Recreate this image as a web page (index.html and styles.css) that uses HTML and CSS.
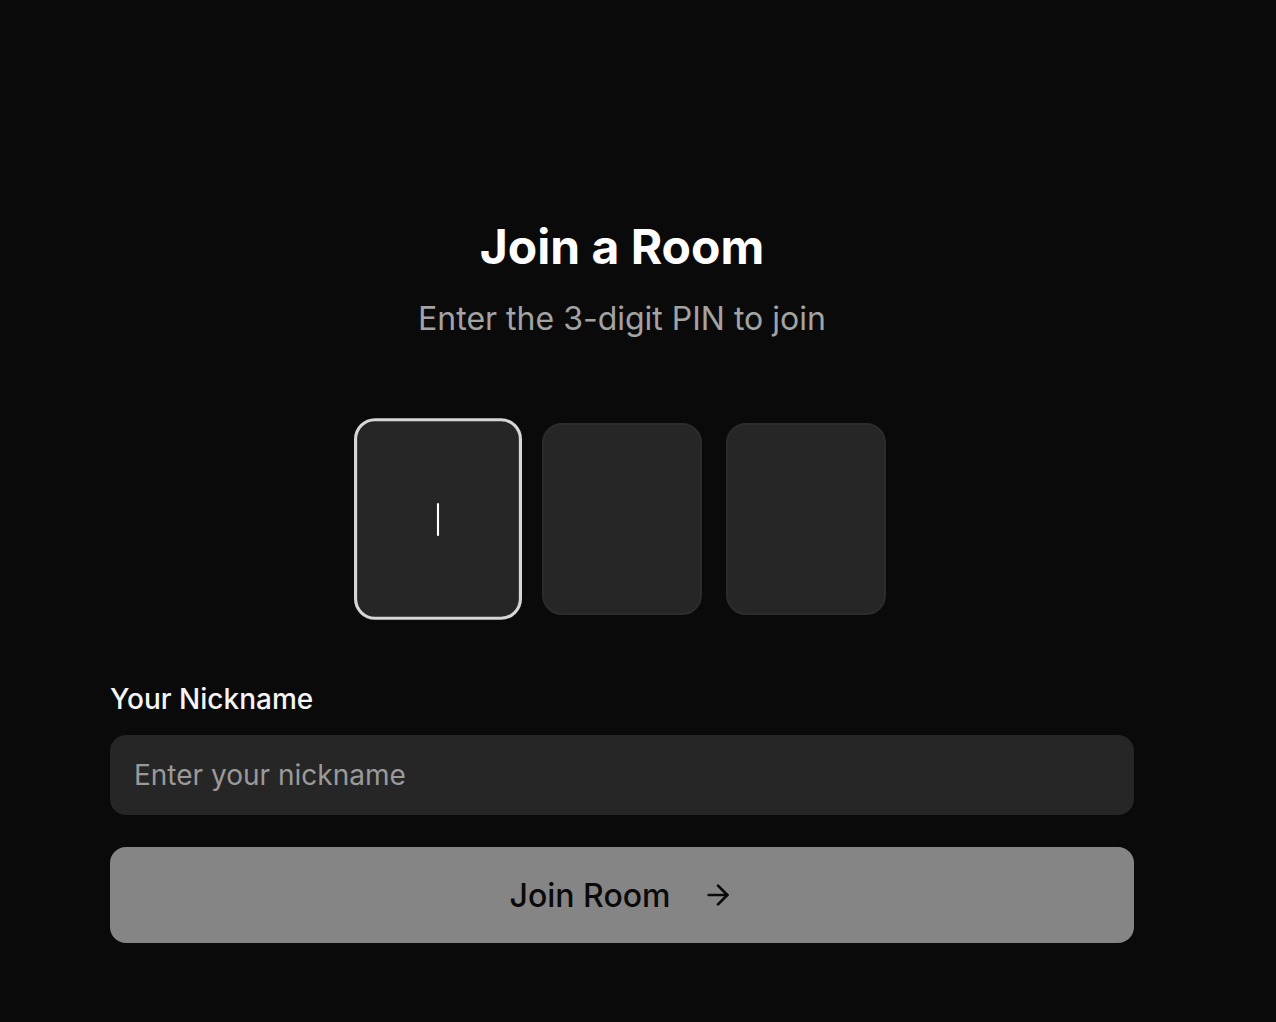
FILE: index.html
```html
<!DOCTYPE html>
<html lang="en">
<head>
<meta charset="utf-8">
<title>Join a Room</title>
<link rel="stylesheet" href="styles.css">
</head>
<body>
<main class="page">
  <header class="intro">
    <h1 class="title">Join a Room</h1>
    <p class="subtitle">Enter the 3-digit PIN to join</p>
  </header>
  <div class="pin-row">
    <div class="pin-box pin-box--focused" role="textbox" aria-label="PIN digit 1"><span class="caret"></span></div>
    <div class="pin-box" role="textbox" aria-label="PIN digit 2"></div>
    <div class="pin-box" role="textbox" aria-label="PIN digit 3"></div>
  </div>
  <form class="form">
    <label class="label" for="nickname">Your Nickname</label>
    <input class="text-input" id="nickname" type="text" placeholder="Enter your nickname">
    <button class="join-btn" type="button" disabled>
      <span class="join-btn__text">Join Room</span>
      <svg class="join-btn__icon" viewBox="0 0 24 24" width="32" height="32" fill="none" stroke="currentColor" stroke-width="2" stroke-linecap="round" stroke-linejoin="round" aria-hidden="true">
        <path d="M5 12h14"/>
        <path d="m12 5 7 7-7 7"/>
      </svg>
    </button>
  </form>
</main>
</body>
</html>
```
FILE: styles.css
```css
html, body {
  margin: 0;
  padding: 0;
  background: #0a0a0a;
}

body {
  font-family: Inter, "Noto Sans", "Liberation Sans", sans-serif;
  color: #ffffff;
  min-height: 1022px;
}

.page {
  width: 1024px;
  margin-left: 110px;
  padding-top: 219px;
  display: flex;
  flex-direction: column;
}

.intro {
  display: flex;
  flex-direction: column;
  align-items: center;
}

.title {
  margin: 0;
  font-size: 48px;
  line-height: 56px;
  font-weight: 700;
  color: #ffffff;
}

.subtitle {
  margin: 24px 0 0;
  font-size: 32px;
  line-height: 40px;
  font-weight: 400;
  color: #a3a3a3;
}

.pin-row {
  margin-top: 84px;
  display: flex;
  justify-content: center;
  gap: 24px;
}

.pin-box {
  box-sizing: border-box;
  width: 160px;
  height: 192px;
  border-radius: 20px;
  background: #262626;
  border: 2px solid #2c2c2c;
  display: flex;
  align-items: center;
  justify-content: center;
}

.pin-box--focused {
  border: 3px solid #d6d6d6;
  transform: scale(1.05);
}

.caret {
  display: block;
  width: 2px;
  height: 31px;
  background: #ffffff;
}

.form {
  margin-top: 64px;
  display: flex;
  flex-direction: column;
}

.label {
  font-size: 28px;
  line-height: 40px;
  font-weight: 500;
  color: #f5f5f5;
}

.text-input {
  margin-top: 16px;
  box-sizing: border-box;
  height: 80px;
  width: 100%;
  padding: 0 24px;
  border: none;
  outline: none;
  border-radius: 16px;
  background: #262626;
  color: #ffffff;
  font-family: inherit;
  font-size: 28px;
}

.text-input::placeholder {
  color: #9a9a9a;
}

.join-btn {
  margin-top: 32px;
  height: 96px;
  width: 100%;
  border: none;
  border-radius: 16px;
  background: #ffffff;
  color: #0a0a0a;
  opacity: 0.5;
  font-family: inherit;
  font-size: 32px;
  font-weight: 500;
  display: flex;
  align-items: center;
  justify-content: center;
  gap: 32px;
  padding: 0;
}

.join-btn__icon {
  display: block;
}
```
